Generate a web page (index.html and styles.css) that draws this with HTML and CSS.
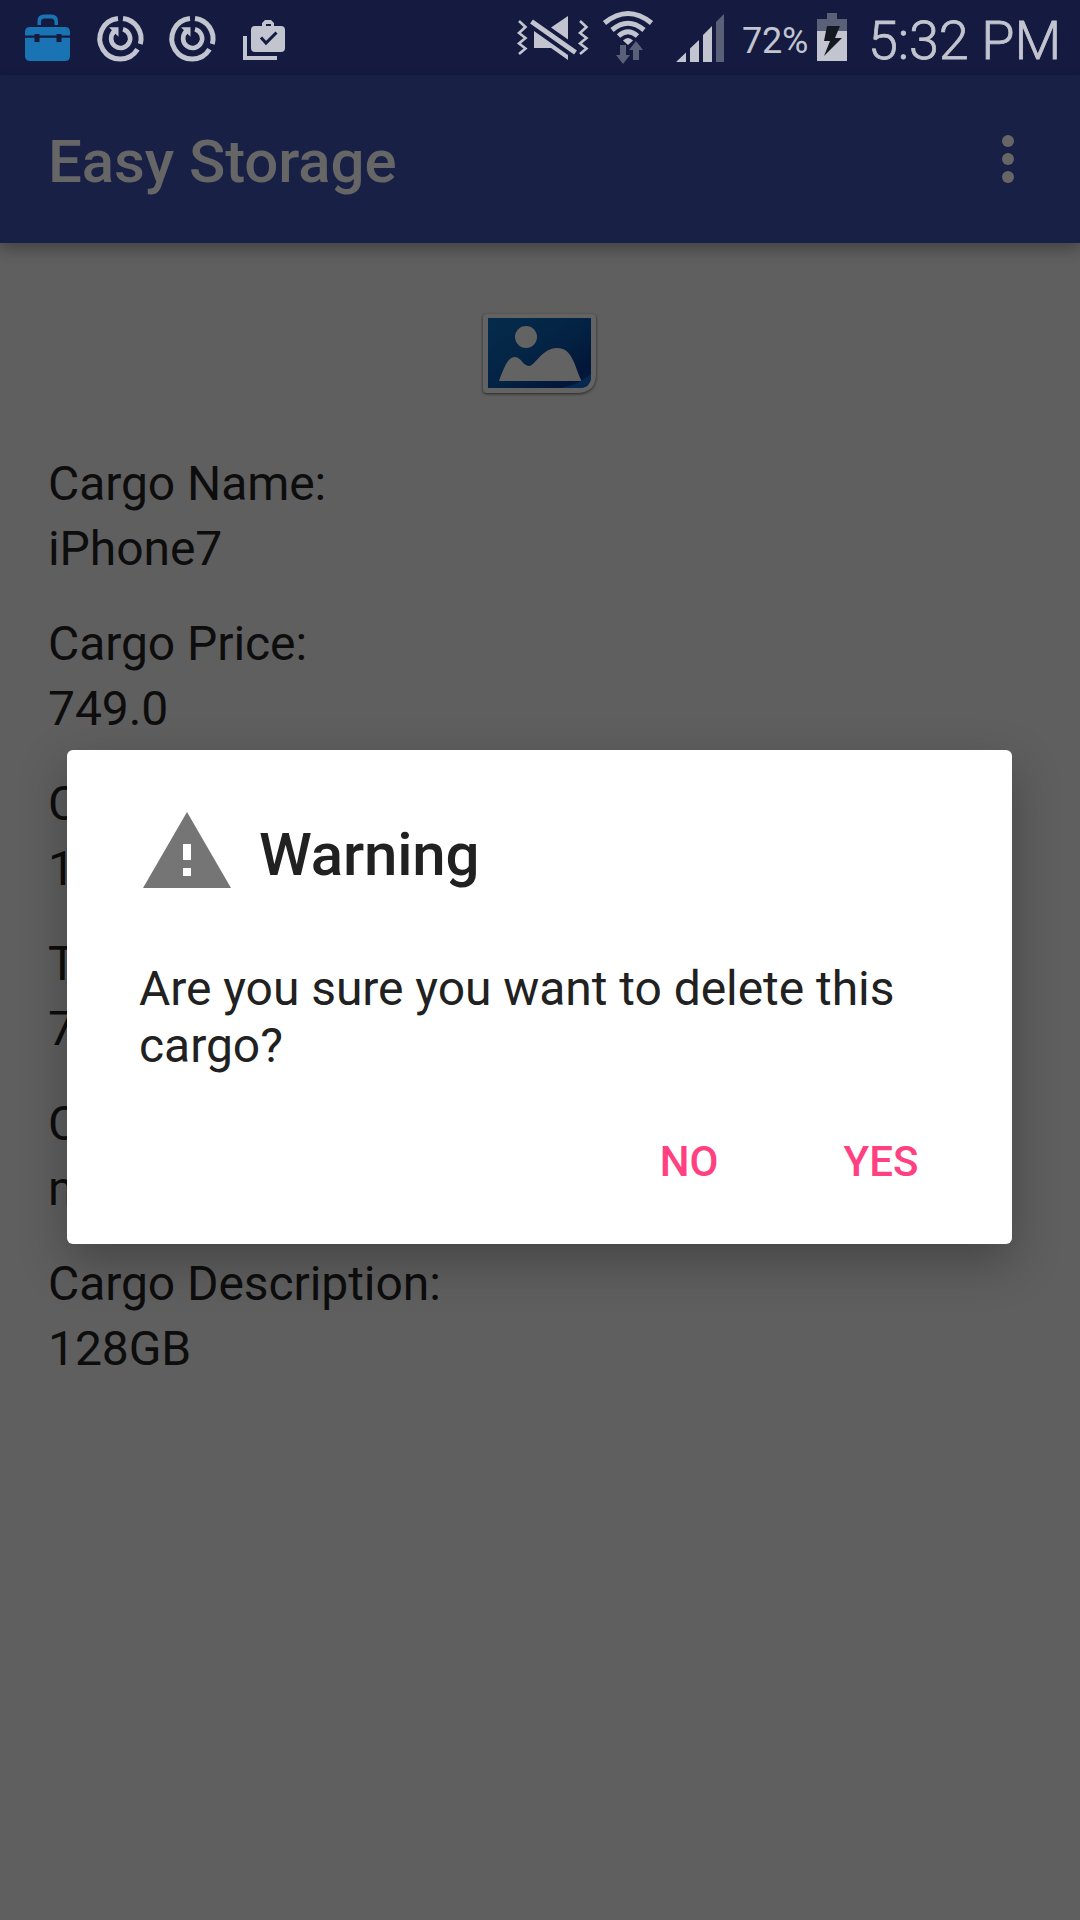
FILE: index.html
```html
<!DOCTYPE html>
<html lang="en">
<head>
<meta charset="utf-8">
<title>Easy Storage</title>
<link rel="stylesheet" href="styles.css">
</head>
<body>
<div class="screen">
  <header class="status-bar">
    <svg class="status-icons" width="300" height="75" viewBox="0 0 300 75" aria-hidden="true">
      <g fill="#1a73b2">
        <path d="M37.500 25v-4q0-6.500 6.500-6.500h7.500q6.500 0 6.500 6.500v4h-3.500v-3q0-3.500-3.500-3.500h-6.500q-3.500 0-3.500 3.500v3z"/>
        <path d="M25 35.500V32q0-5 5-5h35q5 0 5 5v3.500h-8.500V34h-5v1.500h-17V34h-5v1.500z"/>
        <path d="M25 37.800h9.500V42h5v-4.200h17V42h5v-4.200H70V56q0 5-5 5H30q-5 0-5-5z"/>
      </g>
      <g id="sync" fill="none" stroke="#c2c4cf" stroke-width="5">
        <path d="M123 18.500A20.300 20.300 0 0 1 140.300 44M137.500 49.200A20.300 20.300 0 1 1 118 18.500"/>
        <path d="M123 29.300A9.500 9.500 0 1 1 114.200 31.500" stroke-width="4.600"/>
        <path d="M109 27.300h9.500v9.500l-3-3-2 1.500-3-3 1.500-2z" fill="#c2c4cf" stroke="none"/>
      </g>
      <use href="#sync" x="72"/>
      <path d="M245 36v22h32" fill="none" stroke="#c2c4cf" stroke-width="4"/>
      <path fill="#c2c4cf" fill-rule="evenodd" d="M255 26h7v-3l3-3h6l3 3v3h7q4 0 4 4v18q0 4-4 4h-26q-4 0-4-4V30q0-4 4-4zm11 0h5v-2h-5z"/>
      <path d="M261 37.500l5 5.500 10.500-10.500" fill="none" stroke="#141a40" stroke-width="3"/>
    </svg>
    <div class="status-right">
      <svg width="240" height="75" viewBox="500 0 240 75" aria-hidden="true">
        <g fill="none" stroke="#c2c4cf" stroke-width="2.600">
          <path d="M519 21l6.500 6-6.500 6 6.500 5-6.500 5.500 6.500 5-6.500 5.500"/>
          <path d="M580 21l6.500 6-6.500 6 6.500 5-6.500 5.500 6.500 5-6.500 5.500"/>
          <path d="M531.500 21.500l44 31" stroke-width="5"/>
        </g>
        <path fill="#c2c4cf" d="M568 16v23.500L551 27.500zM534 31l34 24v5l-17-12h-17z"/>
        <g fill="none" stroke="#c2c4cf" stroke-width="5">
          <path d="M604.500 23Q628 4 651.500 23"/>
          <path d="M612 30Q628 16.500 644 30"/>
          <path d="M618.500 36Q628 27.500 637.500 36"/>
        </g>
        <path fill="#c2c4cf" d="M623 40.500q5-5 10 0l-5 4.500z"/>
        <path fill="#5b6079" d="M620 45h6v10h4l-7 9-7-9h4zM633 60V50h-4l7-9 7 9h-4v10z"/>
        <path fill="#c2c4cf" d="M676 62l10-9.500V62zM690 48.500l9-8.500v22h-9zM703 35l9-9v36h-9z"/>
        <path fill="#5b6079" d="M716 22l8-8v48h-8z"/>
      </svg>
      <span class="battery-level">72%</span>
      <svg class="battery" width="30" height="75" viewBox="817 0 30 75" aria-hidden="true">
        <path fill="#5b6079" d="M827 13h10v6h10v12h-30V19h10z"/>
        <path fill="#c2c4cf" d="M817 31h30v30h-30z"/>
        <path fill="#141821" d="M827 26h13l-5 12h7l-18 18 6-15h-6z"/>
      </svg>
      <span class="clock">5:32 PM</span>
    </div>
  </header>

  <div class="app-bar">
    <h1 class="app-title">Easy Storage</h1>
    <svg width="16" height="52" viewBox="0 0 16 52" fill="#666" aria-hidden="true">
      <circle cx="8" cy="8" r="6"/><circle cx="8" cy="26" r="6"/><circle cx="8" cy="44" r="6"/>
    </svg>
  </div>

  <main class="content">
    <svg class="photo" width="120" height="96" viewBox="480 306 120 96" aria-hidden="true">
      <defs>
        <linearGradient id="sky" x1="0" y1="0" x2="1" y2="1">
          <stop offset="0" stop-color="#052c4b"/><stop offset=".5" stop-color="#042344"/><stop offset=".85" stop-color="#021638"/><stop offset="1" stop-color="#042448"/>
        </linearGradient>
      </defs>
      <path class="photo-frame" fill="#636363" d="M487 314h105q4 0 4 4v56q0 19-19 19h-90q-4 0-4-4v-71q0-4 4-4z"/>
      <path fill="url(#sky)" d="M488 318h103v58q0 12-12 12h-91z"/>
      <path fill="#08294f" d="M591 374v4q-1 10-12 10h-19q20-3 31-14z"/>
      <circle cx="526" cy="337" r="11" fill="#636363"/>
      <path fill="#636363" d="M499 381C505 364 509 357 515 357S523 366 529 366 542 348 557 348 574 364 581.500 381z"/>
    </svg>
    <dl class="fields">
      <div class="field"><dt>Cargo Name:</dt><dd>iPhone7</dd></div>
      <div class="field"><dt>Cargo Price:</dt><dd>749.0</dd></div>
      <div class="field"><dt>C</dt><dd>1</dd></div>
      <div class="field"><dt>T</dt><dd>7</dd></div>
      <div class="field"><dt>C</dt><dd>n</dd></div>
      <div class="field"><dt>Cargo Description:</dt><dd>128GB</dd></div>
    </dl>
  </main>

  <section class="dialog" role="alertdialog">
    <div class="dialog-head">
      <svg width="96" height="96" viewBox="0 0 24 24" aria-hidden="true">
        <path fill="#757575" d="M1 21h22L12 2 1 21zm12-3h-2v-2h2v2zm0-4h-2v-4h2v4z"/>
      </svg>
      <h2 class="dialog-title">Warning</h2>
    </div>
    <p class="dialog-text">Are you sure you want to delete this cargo?</p>
    <div class="dialog-actions">
      <button class="action">NO</button>
      <button class="action">YES</button>
    </div>
  </section>
</div>
</body>
</html>
```
FILE: styles.css
```css
* {
  box-sizing: border-box;
  margin: 0;
  padding: 0;
}

body {
  font-family: Roboto, "Liberation Sans", sans-serif;
  background: #5f5f5f;
}

svg {
  display: block;
  flex: none;
}

.screen {
  position: relative;
  width: 1080px;
  height: 1920px;
  overflow: hidden;
  background: #5f5f5f;
}

.status-bar {
  display: flex;
  justify-content: space-between;
  height: 75px;
  background: #141a40;
  color: #c2c4cf;
}

.status-right {
  display: flex;
  padding-right: 20px;
  white-space: nowrap;
}

.battery-level {
  width: 77px;
  padding-left: 2px;
  font-size: 36px;
  line-height: 82px;
  letter-spacing: -0.2px;
}

.clock {
  width: 213px;
  padding-left: 21px;
  font-size: 54px;
  font-weight: 300;
  line-height: 82px;
  letter-spacing: -0.2px;
  -webkit-text-stroke: 0.8px #c2c4cf;
}

.app-bar {
  display: flex;
  align-items: center;
  justify-content: space-between;
  height: 168px;
  padding: 0 64px 0 48px;
  background: #192046;
  box-shadow: 0 6px 14px rgba(0, 0, 0, 0.3);
}

.app-title {
  font-size: 60px;
  font-weight: 500;
  line-height: 70px;
  letter-spacing: -0.1px;
  color: #666;
  padding-top: 6px;
}

.content {
  padding: 63px 48px 0;
}

.photo {
  margin: 0 auto 49px;
}

.photo-frame {
  filter: drop-shadow(0 1px 1.5px rgba(0, 0, 0, 0.6));
}

.fields {
  display: flex;
  flex-direction: column;
  gap: 30px;
  font-size: 48px;
  line-height: 65px;
  letter-spacing: -0.07px;
  color: #0d0d0d;
}

.dialog {
  position: absolute;
  left: 67px;
  top: 750px;
  width: 945px;
  height: 494px;
  padding: 54px 72px 0;
  border-radius: 6px;
  background: #fff;
  color: #212121;
  box-shadow: 0 18px 48px rgba(0, 0, 0, 0.28);
}

.dialog-head {
  display: flex;
  align-items: center;
  gap: 24px;
}

.dialog-title {
  padding-top: 6px;
  font-size: 60px;
  font-weight: 500;
  line-height: 70px;
  letter-spacing: -0.15px;
}

.dialog-text {
  margin-top: 60px;
  font-size: 48px;
  line-height: 57px;
  letter-spacing: -0.05px;
}

.dialog-actions {
  display: flex;
  justify-content: flex-end;
  margin: 16px -37px 0 0;
}

.action {
  width: 192px;
  height: 144px;
  border: 0;
  background: none;
  color: #ff4081;
  font: 500 42px/50px Roboto, "Liberation Sans", sans-serif;
}
```
